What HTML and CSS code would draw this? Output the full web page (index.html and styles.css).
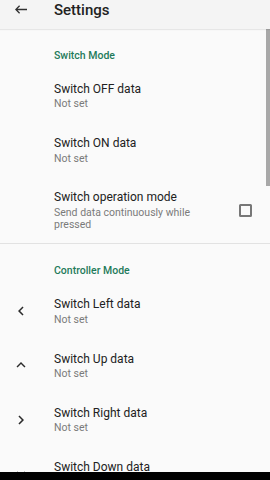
FILE: index.html
```html
<!DOCTYPE html>
<html lang="en">
<head>
  <meta charset="UTF-8" />
  <meta name="viewport" content="width=device-width, initial-scale=1.0" />
  <title>Settings</title>
  <link rel="stylesheet" href="styles.css">
</head>
<body>
  <div class="appbar">
    <svg class="back" width="12" height="9" viewBox="0 0 12 9">
      <path d="M0.8 4.5H12M4.6 0.7L0.8 4.5L4.6 8.3" fill="none" stroke="#303030" stroke-width="1.3"/>
    </svg>
    <span class="appbar-title">Settings</span>
  </div>

  <div class="scrollbar"></div>

  <div class="category">Switch Mode</div>

  <div class="pref">
    <div class="pref-icon"></div>
    <div class="pref-text">
      <div class="pref-title">Switch OFF data</div>
      <div class="pref-sub">Not set</div>
    </div>
  </div>
  <div class="pref">
    <div class="pref-icon"></div>
    <div class="pref-text">
      <div class="pref-title">Switch ON data</div>
      <div class="pref-sub">Not set</div>
    </div>
  </div>
  <div class="pref">
    <div class="pref-icon"></div>
    <div class="pref-text">
      <div class="pref-title">Switch operation mode</div>
      <div class="pref-sub">Send data continuously while pressed</div>
    </div>
    <div class="checkbox"></div>
  </div>

  <div class="divider"></div>

  <div class="category">Controller Mode</div>

  <div class="pref">
    <div class="pref-icon">
      <svg width="18" height="18" viewBox="0 0 24 24"><path d="M15.41 16.59L10.83 12l4.58-4.59L14 6l-6 6 6 6 1.41-1.41z"/></svg>
    </div>
    <div class="pref-text">
      <div class="pref-title">Switch Left data</div>
      <div class="pref-sub">Not set</div>
    </div>
  </div>
  <div class="pref">
    <div class="pref-icon">
      <svg width="18" height="18" viewBox="0 0 24 24"><path d="M7.41 15.41L12 10.83l4.59 4.58L18 14l-6-6-6 6z"/></svg>
    </div>
    <div class="pref-text">
      <div class="pref-title">Switch Up data</div>
      <div class="pref-sub">Not set</div>
    </div>
  </div>
  <div class="pref">
    <div class="pref-icon">
      <svg width="18" height="18" viewBox="0 0 24 24"><path d="M8.59 16.59L13.17 12 8.59 7.41 10 6l6 6-6 6-1.41-1.41z"/></svg>
    </div>
    <div class="pref-text">
      <div class="pref-title">Switch Right data</div>
      <div class="pref-sub">Not set</div>
    </div>
  </div>
  <div class="pref">
    <div class="pref-icon">
      <svg width="18" height="18" viewBox="0 0 24 24"><path d="M7.41 8.59L12 13.17l4.59-4.58L18 10l-6 6-6-6 1.41-1.41z"/></svg>
    </div>
    <div class="pref-text">
      <div class="pref-title">Switch Down data</div>
      <div class="pref-sub">Not set</div>
    </div>
  </div>

  <div class="navbar"></div>
</body>
</html>
```

FILE: styles.css
```css
body {
  margin: 0;
  width: 270px;
  height: 480px;
  overflow: hidden;
  background-color: #fafafa;
  font-family: Roboto, "Noto Sans", sans-serif;
  color: #212121;
}
.appbar {
  height: 29px;
  display: flex;
  align-items: flex-start;
  background-color: #f4f4f4;
  box-shadow: 0 1px 1px rgba(0, 0, 0, 0.08);
  position: relative;
  z-index: 1;
}
.back {
  margin: 5px 0 0 15px;
}
.appbar-title {
  margin-left: 27px;
  font-size: 15px;
  line-height: 20px;
  font-weight: 500;
  color: #222;
}
/* scrollbar thumb over the list */
.scrollbar {
  position: absolute;
  top: 29px;
  right: 0;
  width: 4px;
  height: 157px;
  background-color: #a8a8a8;
}
.category {
  padding: 20px 0 5.3px 54px;
  font-size: 10.5px;
  line-height: 14px;
  font-weight: 500;
  color: #1f7a5a;
}
.pref {
  display: flex;
  align-items: center;
  padding: 12.45px 0;
}
.pref-icon {
  width: 42px;
  padding-left: 12px;
  display: flex;
  align-items: center;
  flex-shrink: 0;
}
.pref-icon svg {
  fill: #2b2b2b;
}
.pref-text {
  flex: 1;
}
.pref-title {
  font-size: 12px;
  line-height: 16px;
}
.pref-sub {
  margin-top: 1.5px;
  font-size: 10.5px;
  line-height: 12px;
  color: #7a7a7a;
}
.checkbox {
  width: 9px;
  height: 9px;
  border: 2px solid #777;
  border-radius: 1.5px;
  margin: 0 18px 0 14px;
  flex-shrink: 0;
}
.divider {
  height: 1px;
  background-color: #e2e2e2;
}
.navbar {
  position: fixed;
  left: 0;
  right: 0;
  bottom: 0;
  height: 8px;
  background-color: #000;
}
```
